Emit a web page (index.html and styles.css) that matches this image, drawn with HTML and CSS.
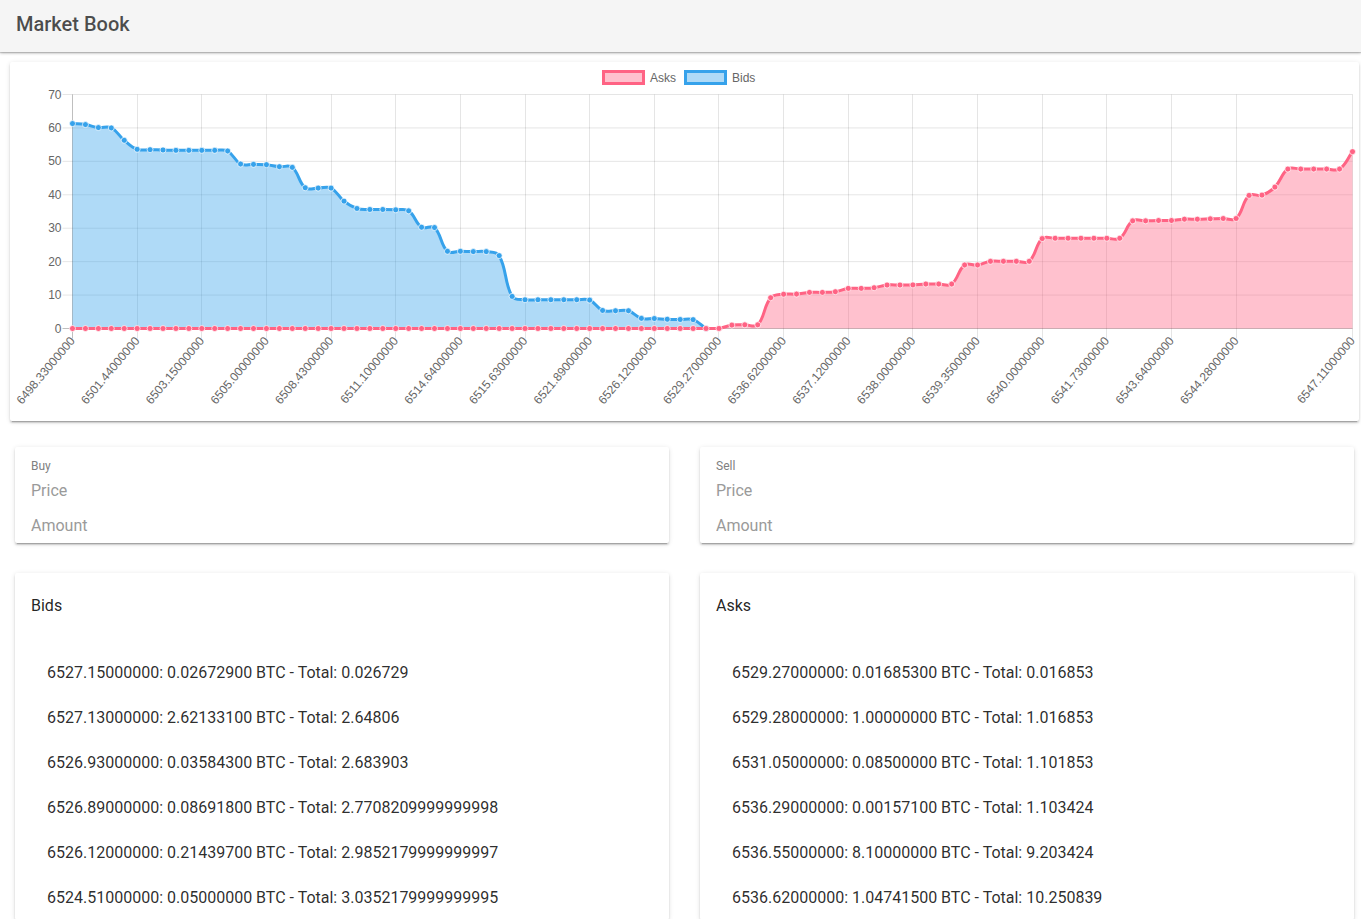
FILE: index.html
```html
<!DOCTYPE html>
<html lang="en">
<head>
<meta charset="utf-8">
<title>Market Book</title>
<link rel="stylesheet" href="styles.css">
</head>
<body>
<header class="toolbar">
  <h1 class="toolbar-title">Market Book</h1>
</header>

<section class="card chart-card">
  <svg id="depth-chart" class="depth-chart" width="1349" height="359" viewBox="0 0 1349 359"></svg>
</section>

<div class="two-col forms">
  <form class="card order-form">
    <div class="form-label">Buy</div>
    <input class="field" type="text" placeholder="Price">
    <input class="field field-second" type="text" placeholder="Amount">
  </form>
  <form class="card order-form">
    <div class="form-label">Sell</div>
    <input class="field" type="text" placeholder="Price">
    <input class="field field-second" type="text" placeholder="Amount">
  </form>
</div>

<div class="two-col books">
  <section class="card book">
    <h2 class="book-title">Bids</h2>
    <ul class="book-list">
      <li>6527.15000000: 0.02672900 BTC - Total: 0.026729</li>
      <li>6527.13000000: 2.62133100 BTC - Total: 2.64806</li>
      <li>6526.93000000: 0.03584300 BTC - Total: 2.683903</li>
      <li>6526.89000000: 0.08691800 BTC - Total: 2.7708209999999998</li>
      <li>6526.12000000: 0.21439700 BTC - Total: 2.9852179999999997</li>
      <li>6524.51000000: 0.05000000 BTC - Total: 3.0352179999999995</li>
    </ul>
  </section>
  <section class="card book">
    <h2 class="book-title">Asks</h2>
    <ul class="book-list">
      <li>6529.27000000: 0.01685300 BTC - Total: 0.016853</li>
      <li>6529.28000000: 1.00000000 BTC - Total: 1.016853</li>
      <li>6531.05000000: 0.08500000 BTC - Total: 1.101853</li>
      <li>6536.29000000: 0.00157100 BTC - Total: 1.103424</li>
      <li>6536.55000000: 8.10000000 BTC - Total: 9.203424</li>
      <li>6536.62000000: 1.04741500 BTC - Total: 10.250839</li>
    </ul>
  </section>
</div>

<script src="script.js"></script>
</body>
</html>
```

FILE: styles.css
```css
html, body {
  margin: 0;
  padding: 0;
  background: #ffffff;
}

body {
  font-family: Roboto, "Noto Sans", sans-serif;
  color: rgba(0, 0, 0, 0.87);
}

.toolbar {
  position: relative;
  z-index: 2;
  height: 52px;
  display: flex;
  align-items: center;
  padding: 0 16px;
  background: #f5f5f5;
  box-shadow: 0 1px 3px rgba(0, 0, 0, 0.28), 0 1px 1px rgba(0, 0, 0, 0.14);
}

.toolbar-title {
  margin: 0;
  margin-top: -4px;
  font-size: 20px;
  font-weight: 500;
  color: rgba(0, 0, 0, 0.7);
  letter-spacing: 0;
}

.card {
  background: #ffffff;
  border-radius: 2px;
  box-shadow: 0 3px 1px -2px rgba(0, 0, 0, 0.2), 0 2px 2px 0 rgba(0, 0, 0, 0.14), 0 1px 5px 0 rgba(0, 0, 0, 0.12);
}

.chart-card {
  margin: 10px 2px 0 10px;
  height: 359px;
}

.depth-chart {
  display: block;
  width: 100%;
  height: 359px;
  font-family: "Liberation Sans", Arial, sans-serif;
  font-size: 12px;
}

.two-col {
  display: grid;
  grid-template-columns: 1fr 1fr;
  column-gap: 31px;
  padding: 0 7px 0 15px;
}

.forms {
  margin-top: 26px;
}

.books {
  margin-top: 30px;
}

.order-form {
  margin: 0;
  padding: 10px 16px 3px;
  display: flex;
  flex-direction: column;
}

.form-label {
  font-size: 12px;
  line-height: 18px;
  color: #808080;
}

.field {
  display: block;
  height: 30px;
  margin: 0;
  padding: 0;
  border: none;
  outline: none;
  background: transparent;
  font-family: Roboto, sans-serif;
  font-size: 16px;
  color: rgba(0, 0, 0, 0.87);
}

.field::placeholder {
  color: #9a9a9a;
  opacity: 1;
}

.field-second {
  margin-top: 5px;
}

.book {
  padding: 21px 16px 0;
}

.book-title {
  margin: 0;
  font-size: 16px;
  font-weight: 400;
  line-height: 24px;
  color: rgba(0, 0, 0, 0.87);
}

.book-list {
  list-style: none;
  margin: 32px 0 0;
  padding: 0 0 0 16px;
}

.book-list li {
  height: 45px;
  line-height: 45px;
  font-size: 16px;
  color: rgba(0, 0, 0, 0.84);
  white-space: nowrap;
}

.grid-line {
  stroke: rgba(0, 0, 0, 0.1);
  stroke-width: 1;
  fill: none;
}

.zero-line {
  stroke: rgba(0, 0, 0, 0.25);
  stroke-width: 1;
  fill: none;
}

.tick-label {
  fill: #666666;
}

.legend-label {
  fill: #666666;
}
```

FILE: script.js
```js
(function () {
  var NS = 'http://www.w3.org/2000/svg';
  var svg = document.getElementById('depth-chart');

  var LEFT = 62.5, RIGHT = 1342.5, TOP = 32.5, BOTTOM = 266.5, MAX = 70, N = 100;

  var bids = [61.3, 61.0, 60.1, 60.0, 56.3, 53.6, 53.5, 53.4, 53.3, 53.3,
    53.3, 53.3, 53.1, 49.2, 49.1, 49.0, 48.4, 48.2, 42.1, 42.0,
    42.0, 38.1, 35.9, 35.6, 35.6, 35.5, 35.2, 30.3, 30.2, 23.1,
    23.1, 23.0, 23.0, 21.8, 9.6, 8.6, 8.6, 8.6, 8.6, 8.6,
    8.5, 5.4, 5.3, 5.3, 3.035218, 2.985218, 2.770821, 2.683903, 2.64806, 0.026729];

  var asksTail = [0.016853, 1.016853, 1.101853, 1.103424, 9.203424, 10.250839, 10.3, 10.8, 10.8, 11.0,
    12.0, 12.0, 12.2, 13.0, 13.0, 13.05, 13.3, 13.3, 13.3, 19.0,
    19.0, 20.1, 20.1, 20.1, 20.1, 26.9, 27.0, 27.0, 27.0, 27.0,
    27.0, 27.0, 32.2, 32.2, 32.3, 32.3, 32.7, 32.7, 32.8, 32.9,
    32.9, 39.8, 39.9, 42.3, 47.7, 47.7, 47.7, 47.7, 47.7, 52.9];
  var asks = [];
  for (var a = 0; a < 50; a++) asks.push(0);
  asks = asks.concat(asksTail);

  var ticks = [
    [0, '6498.33000000'], [5, '6501.44000000'], [10, '6503.15000000'], [15, '6505.00000000'],
    [20, '6508.43000000'], [25, '6511.10000000'], [30, '6514.64000000'], [35, '6515.63000000'],
    [40, '6521.89000000'], [45, '6526.12000000'], [50, '6529.27000000'], [55, '6536.62000000'],
    [60, '6537.12000000'], [65, '6538.00000000'], [70, '6539.35000000'], [75, '6540.00000000'],
    [80, '6541.73000000'], [85, '6543.64000000'], [90, '6544.28000000'], [99, '6547.11000000']
  ];

  function xAt(i) { return LEFT + (RIGHT - LEFT) * i / (N - 1); }
  function yAt(v) { return BOTTOM - (BOTTOM - TOP) * v / MAX; }

  function el(tag, attrs, parent) {
    var e = document.createElementNS(NS, tag);
    for (var k in attrs) e.setAttribute(k, attrs[k]);
    (parent || svg).appendChild(e);
    return e;
  }

  /* grid: horizontal */
  for (var v = 0; v <= MAX; v += 10) {
    var y = yAt(v);
    el('line', { x1: LEFT - 10, y1: y, x2: RIGHT, y2: y, 'class': v === 0 ? 'zero-line' : 'grid-line' });
    var t = el('text', { x: LEFT - 11, y: y + 4, 'text-anchor': 'end', 'class': 'tick-label' });
    t.textContent = String(v);
  }
  /* grid: vertical */
  ticks.forEach(function (tk, idx) {
    var x = Math.round(xAt(tk[0]) - 0.5) + 0.5;
    el('line', { x1: x, y1: TOP, x2: x, y2: BOTTOM + 10, 'class': idx === 0 ? 'zero-line' : 'grid-line' });
    var lx = xAt(tk[0]);
    var ly = BOTTOM + 10;
    var t = el('text', {
      x: 0, y: 0, 'text-anchor': 'end', 'class': 'tick-label',
      transform: 'translate(' + lx.toFixed(2) + ',' + ly + ') rotate(-50) translate(0,4)'
    });
    t.textContent = tk[1];
  });

  function points(data) {
    var pts = [];
    data.forEach(function (d, i) {
      if (d === null || d === undefined) return;
      pts.push({ x: xAt(i), y: yAt(d) });
    });
    var tension = 0.4;
    pts.forEach(function (p, i) {
      var prev = pts[i - 1] || p, next = pts[i + 1] || p;
      var d01 = Math.hypot(p.x - prev.x, p.y - prev.y);
      var d12 = Math.hypot(next.x - p.x, next.y - p.y);
      var s01 = d01 / (d01 + d12), s12 = d12 / (d01 + d12);
      if (!isFinite(s01)) s01 = 0;
      if (!isFinite(s12)) s12 = 0;
      var fa = tension * s01, fb = tension * s12;
      p.c1 = { x: p.x - fa * (next.x - prev.x), y: p.y - fa * (next.y - prev.y) };
      p.c2 = { x: p.x + fb * (next.x - prev.x), y: p.y + fb * (next.y - prev.y) };
      [p.c1, p.c2].forEach(function (c) {
        c.x = Math.min(Math.max(c.x, LEFT), RIGHT);
        c.y = Math.min(Math.max(c.y, TOP), BOTTOM);
      });
    });
    return pts;
  }

  function curve(pts) {
    var d = 'M' + pts[0].x.toFixed(2) + ',' + pts[0].y.toFixed(2);
    for (var i = 1; i < pts.length; i++) {
      var a = pts[i - 1], b = pts[i];
      d += ' C' + a.c2.x.toFixed(2) + ',' + a.c2.y.toFixed(2) + ' ' +
        b.c1.x.toFixed(2) + ',' + b.c1.y.toFixed(2) + ' ' +
        b.x.toFixed(2) + ',' + b.y.toFixed(2);
    }
    return d;
  }

  function dataset(data, line, fill) {
    var pts = points(data);
    var c = curve(pts);
    el('path', {
      d: c + ' L' + pts[pts.length - 1].x.toFixed(2) + ',' + BOTTOM + ' L' + pts[0].x.toFixed(2) + ',' + BOTTOM + ' Z',
      fill: fill, stroke: 'none'
    });
    el('path', { d: c, fill: 'none', stroke: line, 'stroke-width': 3, 'stroke-linejoin': 'round' });
    pts.forEach(function (p) {
      el('circle', { cx: p.x.toFixed(2), cy: p.y.toFixed(2), r: 3, fill: line, stroke: 'rgba(255,255,255,0.7)', 'stroke-width': 1 });
    });
  }

  var bidsFull = bids.slice();
  for (var b = 50; b < N; b++) bidsFull.push(null);

  dataset(bidsFull, 'rgb(54,162,235)', 'rgba(54,162,235,0.4)');
  dataset(asks, 'rgb(255,99,132)', 'rgba(255,99,132,0.4)');

  /* legend */
  el('rect', { x: 593.5, y: 9.5, width: 40, height: 12, fill: 'rgba(255,99,132,0.4)', stroke: 'rgb(255,99,132)', 'stroke-width': 3 });
  var l1 = el('text', { x: 640, y: 20, 'class': 'legend-label' });
  l1.textContent = 'Asks';
  el('rect', { x: 675.5, y: 9.5, width: 40, height: 12, fill: 'rgba(54,162,235,0.4)', stroke: 'rgb(54,162,235)', 'stroke-width': 3 });
  var l2 = el('text', { x: 722, y: 20, 'class': 'legend-label' });
  l2.textContent = 'Bids';
})();
```
